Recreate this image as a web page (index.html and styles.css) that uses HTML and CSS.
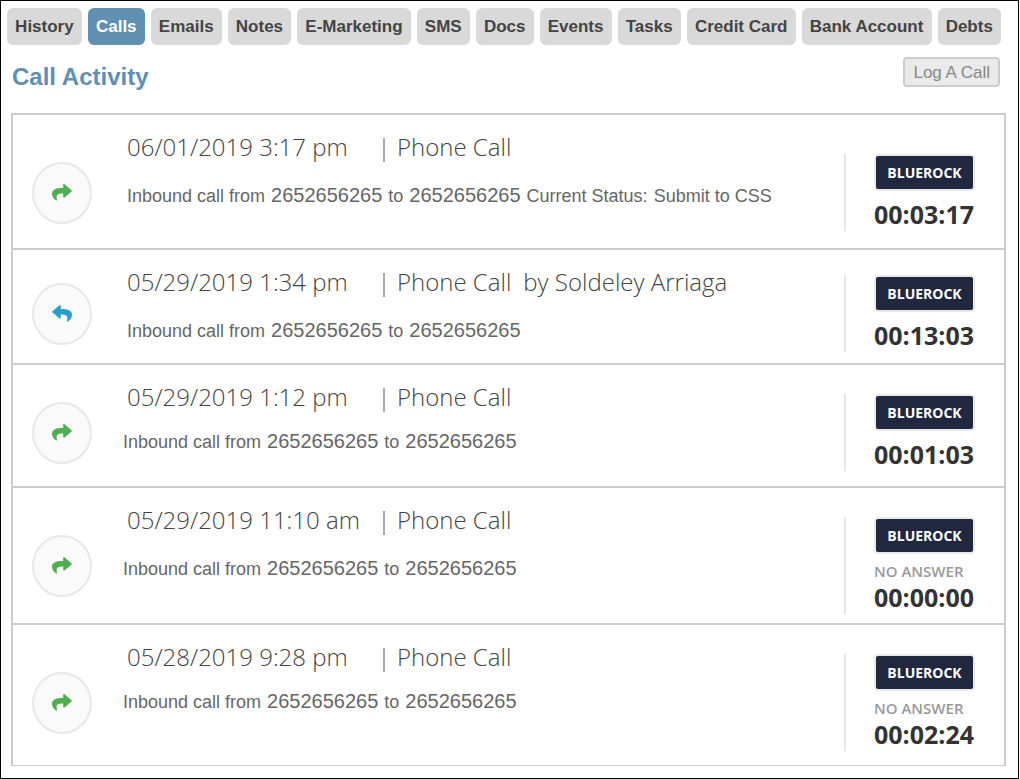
FILE: index.html
```html
<!DOCTYPE html>
<html lang="en">
<head>
<meta charset="utf-8">
<meta name="viewport" content="width=device-width, initial-scale=1">
<title>Call Activity</title>
<link rel="stylesheet" href="styles.css">
</head>
<body>
<svg class="sprite" aria-hidden="true">
  <symbol id="arrow-forward" viewBox="0 0 20 17">
    <path d="M11.2 0.7C11.2 0 12 -0.2 12.5 0.3L19.5 6.2Q20.2 6.9 19.5 7.5L12.5 13.4C12 13.8 11.2 13.6 11.2 12.9V9.6C6.2 9.5 3.4 10.6 5.1 15.7C5.3 16.4 4.6 16.7 4.1 16.4C2 15.2 0 12.8 0 10C0 5 4.5 4 11.2 4Z" fill="currentColor"/>
  </symbol>
</svg>
<main class="frame">
  <nav class="tabs" aria-label="Client sections">
    <button class="tab" type="button">History</button>
    <button class="tab tab--active" type="button" aria-current="page">Calls</button>
    <button class="tab" type="button">Emails</button>
    <button class="tab" type="button">Notes</button>
    <button class="tab" type="button">E-Marketing</button>
    <button class="tab" type="button">SMS</button>
    <button class="tab" type="button">Docs</button>
    <button class="tab" type="button">Events</button>
    <button class="tab" type="button">Tasks</button>
    <button class="tab" type="button">Credit Card</button>
    <button class="tab" type="button">Bank Account</button>
    <button class="tab" type="button">Debts</button>
  </nav>

  <header class="header">
    <h1 class="heading">Call Activity</h1>
    <button class="log-button" type="button">Log A Call</button>
  </header>

  <ul class="calls">
    <li class="call call--status">
      <span class="direction"><svg class="arrow"><use href="#arrow-forward"/></svg></span>
      <div class="body">
        <h2 class="title"><time class="date">06/01/2019 3:17 pm</time><span class="kind">Phone Call</span></h2>
        <p class="details details--inset"><span>Inbound call from</span><span class="number">2652656265</span><span>to</span><span class="number">2652656265</span><span>Current Status:</span><span>Submit to CSS</span></p>
      </div>
      <div class="side"><span class="badge">BLUEROCK</span><span class="duration">00:03:17</span></div>
    </li>
    <li class="call call--agent">
      <span class="direction direction--reply"><svg class="arrow"><use href="#arrow-forward"/></svg></span>
      <div class="body">
        <h2 class="title"><time class="date">05/29/2019 1:34 pm</time><span class="kind">Phone Call</span><span class="agent">by Soldeley Arriaga</span></h2>
        <p class="details details--inset"><span>Inbound call from</span><span class="number">2652656265</span><span>to</span><span class="number">2652656265</span></p>
      </div>
      <div class="side"><span class="badge">BLUEROCK</span><span class="duration">00:13:03</span></div>
    </li>
    <li class="call">
      <span class="direction"><svg class="arrow"><use href="#arrow-forward"/></svg></span>
      <div class="body">
        <h2 class="title"><time class="date">05/29/2019 1:12 pm</time><span class="kind">Phone Call</span></h2>
        <p class="details details--close"><span>Inbound call from</span><span class="number">2652656265</span><span>to</span><span class="number">2652656265</span></p>
      </div>
      <div class="side"><span class="badge">BLUEROCK</span><span class="duration">00:01:03</span></div>
    </li>
    <li class="call call--missed">
      <span class="direction"><svg class="arrow"><use href="#arrow-forward"/></svg></span>
      <div class="body">
        <h2 class="title"><time class="date">05/29/2019 11:10 am</time><span class="kind">Phone Call</span></h2>
        <p class="details"><span>Inbound call from</span><span class="number">2652656265</span><span>to</span><span class="number">2652656265</span></p>
      </div>
      <div class="side"><span class="badge">BLUEROCK</span><span class="answer">NO ANSWER</span><span class="duration">00:00:00</span></div>
    </li>
    <li class="call call--last">
      <span class="direction"><svg class="arrow"><use href="#arrow-forward"/></svg></span>
      <div class="body">
        <h2 class="title"><time class="date">05/28/2019 9:28 pm</time><span class="kind">Phone Call</span></h2>
        <p class="details details--close"><span>Inbound call from</span><span class="number">2652656265</span><span>to</span><span class="number">2652656265</span></p>
      </div>
      <div class="side"><span class="badge">BLUEROCK</span><span class="answer">NO ANSWER</span><span class="duration">00:02:24</span></div>
    </li>
  </ul>
</main>
</body>
</html>
```
FILE: styles.css
```css
* {
  box-sizing: border-box;
}

body {
  margin: 0;
  background: #fff;
  font-family: "Liberation Sans", Arial, sans-serif;
}

.sprite {
  display: none;
}

.frame {
  margin-right: 1px;
  border: 1px solid #000;
  padding: 7px 12px 12px 10px;
}

.tabs {
  display: flex;
  gap: 6px;
  margin: 0 5px 0 -4px;
}

.tab {
  flex: 1 0 auto;
  border: 0;
  border-radius: 6px;
  padding: 8px;
  background: #d9d9d9;
  color: #444;
  font: bold 17px/21px "Liberation Sans", Arial, sans-serif;
  white-space: nowrap;
}

.tab--active {
  background: #5f8fb1;
  color: #fff;
}

.header {
  display: flex;
  justify-content: space-between;
  align-items: flex-start;
  padding: 12px 6px 21px 1px;
}

.heading {
  margin: 5px 0 0;
  color: #5f8fb1;
  font-size: 24px;
  line-height: 30px;
}

.log-button {
  border: 2px solid #ccc;
  border-radius: 4px;
  padding: 4px 8px 2px;
  background: #eaeaea;
  color: #888;
  font: 17px/20px "Liberation Sans", Arial, sans-serif;
}

.calls {
  margin: 0;
  border: 2px solid #ccc;
  border-bottom-width: 1px;
  padding: 0;
  list-style: none;
}

.call {
  --top: 29px;
  --bottom: 15px;
  display: flex;
  align-items: stretch;
  padding: 0 29px 0 19px;
}

.call + .call {
  border-top: 2px solid #ccc;
}

.call--status {
  --top: 39px;
  --bottom: 17px;
}

.call--agent {
  --top: 25px;
  --bottom: 11px;
}

.call--missed {
  --bottom: 9px;
}

.call--last {
  --bottom: 14px;
}

.direction {
  display: flex;
  align-items: center;
  justify-content: center;
  align-self: center;
  flex: none;
  width: 60px;
  height: 62px;
  margin: var(--top) 0 var(--bottom);
  border: 2px solid #e8e8e8;
  border-radius: 50%;
  background: #fafafa;
  color: #4fae4f;
}

.direction--reply {
  color: #2a9fcb;
}

.arrow {
  width: 20px;
  height: 17px;
}

.direction--reply .arrow {
  transform: scaleX(-1);
}

.body {
  flex: 1;
  padding: 17px 0 0 31px;
}

.title {
  display: flex;
  align-items: flex-end;
  margin: 0;
  padding-left: 4px;
  color: #444;
  font: 300 24px/30px "Open Sans", sans-serif;
}

.date {
  width: 256px;
}

.kind {
  display: flex;
  align-items: flex-end;
}

.kind::before {
  content: "";
  width: 2px;
  height: 24px;
  margin-right: 12px;
  background: #aaa;
}

.agent {
  margin-left: 12px;
}

.details {
  display: flex;
  flex-wrap: wrap;
  align-items: baseline;
  column-gap: 6px;
  margin: 21px 0 0;
  color: #666;
  font-size: 18px;
  line-height: 24px;
}

.details--close {
  margin-top: 17px;
}

.details--inset {
  padding-left: 4px;
}

.number {
  font-size: 20px;
}

.side {
  display: flex;
  flex: 0 0 131px;
  flex-direction: column;
  align-items: flex-start;
  margin: var(--top) 0 var(--bottom);
  border-left: 2px solid #e6e6e6;
  padding: 0 0 1px 28px;
  font-family: "Open Sans", sans-serif;
}

.badge {
  align-self: stretch;
  margin-bottom: 7px;
  border: 2px solid #e9e9e9;
  border-radius: 4px;
  padding: 7px 0 6px;
  background: #20273f;
  color: #fff;
  font-size: 14px;
  font-weight: 700;
  line-height: 20px;
  text-align: center;
}

.answer {
  color: #999;
  font-size: 15px;
  font-weight: 600;
  line-height: 20px;
}

.duration {
  color: #333;
  font-size: 25px;
  font-weight: 700;
  line-height: 32px;
}
```
